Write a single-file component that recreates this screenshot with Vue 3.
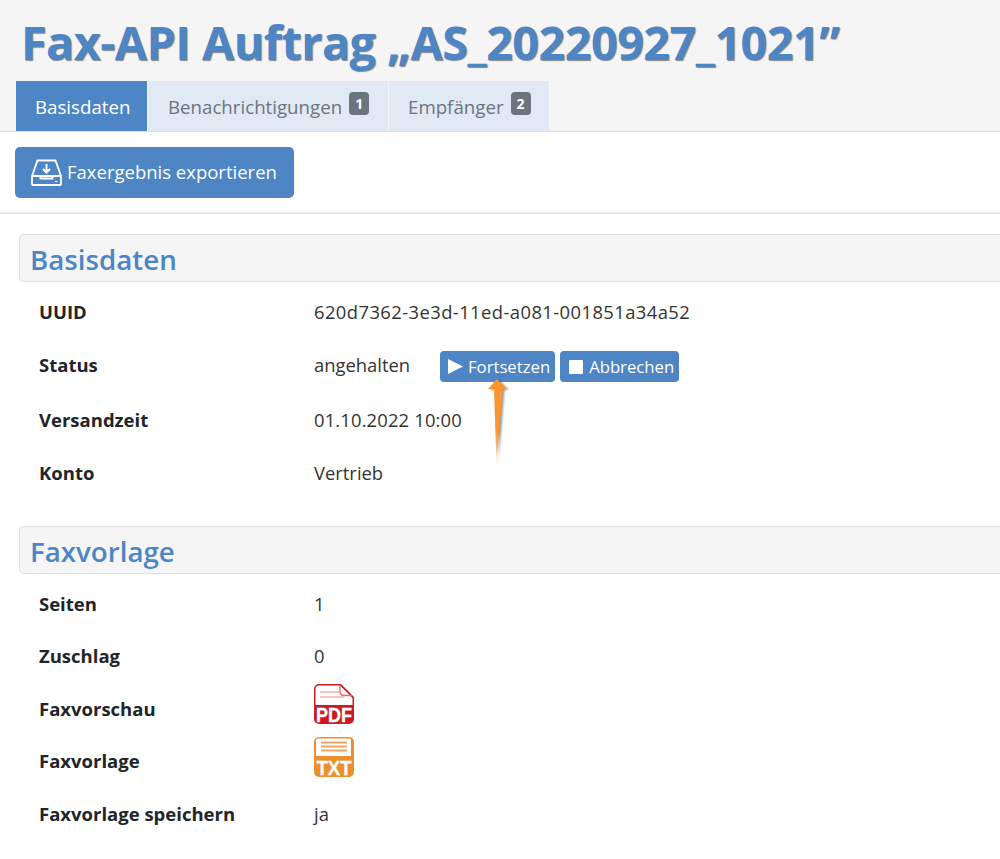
<template>
  <div class="page">
    <header class="head">
      <h1>Fax-API Auftrag „AS_20220927_1021”</h1>
      <nav class="tabs">
        <a v-for="tab in tabs" :key="tab.label" class="tab" :class="{ active: tab.active }">
          {{ tab.label }}<span v-if="tab.count" class="badge">{{ tab.count }}</span>
        </a>
      </nav>
    </header>

    <div class="toolbar">
      <button class="btn btn-big">
        <svg class="export-icon" width="31" height="27" viewBox="0 0 31 27" fill="none" stroke="#fff" stroke-width="1.800">
          <path d="M1 17 6.500 1.500h18L30 17" />
          <rect x="1" y="17" width="29" height="9" rx="1" />
          <path d="M1 17h8.500v2.500h12V17H30" />
          <path d="M15.500 5v8.500M12 10l3.500 3.500L19 10" stroke-width="2" />
          <path d="M24 22.500h2.500" stroke-width="1" />
        </svg>
        Faxergebnis exportieren
      </button>
    </div>

    <section class="section">
      <h2>Basisdaten</h2>
      <div class="rows first">
        <div class="row r52"><span class="key">UUID</span><span class="uuid">620d7362-3e3d-11ed-a081-001851a34a52</span></div>
        <div class="row r55 status">
          <span class="key">Status</span>
          <span class="val-status">angehalten</span>
          <button class="btn btn-small">
            <svg width="15" height="15" viewBox="0 0 15 15"><path d="M0 0v15l15-7.500z" fill="#fff" /></svg>
            Fortsetzen
          </button>
          <button class="btn btn-small stop">
            <svg width="14" height="14" viewBox="0 0 14 14"><rect width="14" height="14" rx="1" fill="#fff" /></svg>
            Abbrechen
          </button>
          <svg class="arrow" width="26" height="90" viewBox="0 0 26 90">
            <defs>
              <linearGradient id="arrow-fill" x1="0" y1="0" x2="0" y2="1">
                <stop offset="0.6" stop-color="#fa962d" />
                <stop offset="1" stop-color="#fa962d" stop-opacity="0.1" />
              </linearGradient>
            </defs>
            <path d="M11 1 2 11h6l2.500 76L16.500 11H21z" fill="url(#arrow-fill)" />
          </svg>
        </div>
        <div class="row r53"><span class="key">Versandzeit</span><span class="date">01.10.2022 10:00</span></div>
        <div class="row r53"><span class="key">Konto</span><span>Vertrieb</span></div>
      </div>
    </section>

    <section class="section second">
      <h2>Faxvorlage</h2>
      <div class="rows">
        <div class="row r52"><span class="key">Seiten</span><span>1</span></div>
        <div class="row r52"><span class="key">Zuschlag</span><span>0</span></div>
        <div class="row r52">
          <span class="key">Faxvorschau</span>
          <svg class="file" width="40" height="40" viewBox="0 0 40 40">
            <path d="M5 0h22l13 13v22a5 5 0 0 1-5 5H5a5 5 0 0 1-5-5V5a5 5 0 0 1 5-5z" fill="#cb1a20" />
            <path d="M5 1.500h21L38.500 14v7H1.500V5Q1.500 1.500 5 1.500z" fill="#fff" />
            <path d="M26 1.500v6q0 4 4 4h8" fill="none" stroke="#e56a6e" stroke-width="1.400" />
            <path d="M6 8h19M6 13h24" stroke="#f0b0b2" stroke-width="1.600" />
            <text x="20" y="37.500" class="file-text" textLength="36" lengthAdjust="spacingAndGlyphs">PDF</text>
          </svg>
        </div>
        <div class="row r52">
          <span class="key">Faxvorlage</span>
          <svg class="file" width="40" height="40" viewBox="0 0 40 40">
            <rect width="40" height="40" rx="5" fill="#ee8f2e" />
            <path d="M4 1.500h31q2 0 2 2V19H2V3.500q0-2 2-2z" fill="#fff" />
            <path d="M7 5.500h26M7 9.500h26M7 13.500h26" stroke="#f0a560" stroke-width="1.800" />
            <text x="20" y="37.500" class="file-text" textLength="35" lengthAdjust="spacingAndGlyphs">TXT</text>
          </svg>
        </div>
        <div class="row r53"><span class="key">Faxvorlage speichern</span><span>ja</span></div>
      </div>
    </section>
  </div>
</template>

<script setup>
const tabs = [
  { label: 'Basisdaten', active: true },
  { label: 'Benachrichtigungen', count: 1 },
  { label: 'Empfänger', count: 2 }
];
</script>

<style>
html, body { margin: 0; background: #fff; overflow: hidden; }
</style>

<style scoped>
.page {
  font-family: "Open Sans", "Liberation Sans", sans-serif;
  font-size: 18.400px;
  color: #333;
  height: 859px;
  overflow: hidden;
}

.head {
  background: #f5f5f5;
  border-bottom: 1px solid #ddd;
  height: 131px;
  padding-left: 16px;
}

h1 {
  margin: 0;
  height: 81px;
  padding-left: 5px;
  font-size: 46.700px;
  line-height: 85px;
  font-weight: 700;
  letter-spacing: -.5px;
  color: #4d85c5;
  text-shadow: 1px 1px 1px rgba(0, 0, 0, .45);
  white-space: nowrap;
}

.tabs {
  display: grid;
  grid-template-columns: 131px 240px 160px;
  gap: 1px;
  height: 50px;
}

.tab {
  display: flex;
  align-items: center;
  padding-left: 19px;
  background: #e0e9f4;
  color: #6c757d;
  font-size: 18.700px;
}

.tab:nth-child(2) {
  padding-left: 20px;
}

.tab.active {
  background: #4d85c5;
  color: #fff;
}

.badge {
  background: #6c757d;
  color: #fff;
  font-size: 14px;
  font-weight: 700;
  line-height: 23px;
  height: 23px;
  min-width: 20px;
  text-align: center;
  border-radius: 4px;
  margin: -6px 0 0 7px;
}

.btn {
  display: inline-flex;
  align-items: center;
  border: 0;
  background: #4d85c5;
  color: #fff;
  font-family: inherit;
}

.toolbar {
  padding: 15px 15px 14px;
  border-bottom: 2px solid #e6e6e6;
}

.btn-big {
  width: 279px;
  height: 51px;
  padding: 0 0 2px 16px;
  font-size: 18.500px;
  border-radius: 5px;
  gap: 5px;
}

.export-icon {
  margin-top: 2px;
}

.section {
  padding: 20px 0 0 19px;
}

.section.second {
  padding-top: 26.500px;
}

h2 {
  margin: 0;
  box-sizing: border-box;
  height: 48px;
  padding-left: 10px;
  border: 1px solid #ddd;
  border-right: 0;
  border-radius: 5px 0 0 5px;
  background: #f5f5f5;
  color: #4d85c5;
  font-size: 27.700px;
  font-weight: 600;
  line-height: 49px;
}

.rows {
  padding: 3.500px 0 0 20px;
}

.rows.first {
  padding-top: 3px;
}

.row {
  display: flex;
  align-items: center;
}

.r52 { height: 52.500px; }
.r53 { height: 53px; }
.r55 { height: 55.500px; }

.key {
  width: 275px;
  font-size: 18.500px;
  font-weight: 700;
  color: #212529;
  flex: none;
}

.uuid {
  letter-spacing: .42px;
}

.date {
  letter-spacing: .15px;
}

.status {
  position: relative;
}

.status .key {
  margin-top: -2px;
}

.val-status {
  width: 126px;
  margin-top: -2px;
}

.btn-small {
  height: 31px;
  padding: 0 5px 0 8px;
  font-size: 16.700px;
  border-radius: 4px;
  gap: 5px;
  margin: 3px 5px 0 0;
}

.btn-small.stop {
  padding-left: 9px;
  gap: 6px;
}

.arrow {
  position: absolute;
  left: 447px;
  top: 40px;
  filter: drop-shadow(2px 1px 1px rgba(0, 0, 0, .4));
}

.file {
  margin-bottom: 8px;
  overflow: visible;
}

.file-text {
  font-family: "Liberation Sans", sans-serif;
  font-size: 20px;
  font-weight: 700;
  fill: #fff;
  stroke: #fff;
  stroke-width: .3px;
  text-anchor: middle;
}
</style>
